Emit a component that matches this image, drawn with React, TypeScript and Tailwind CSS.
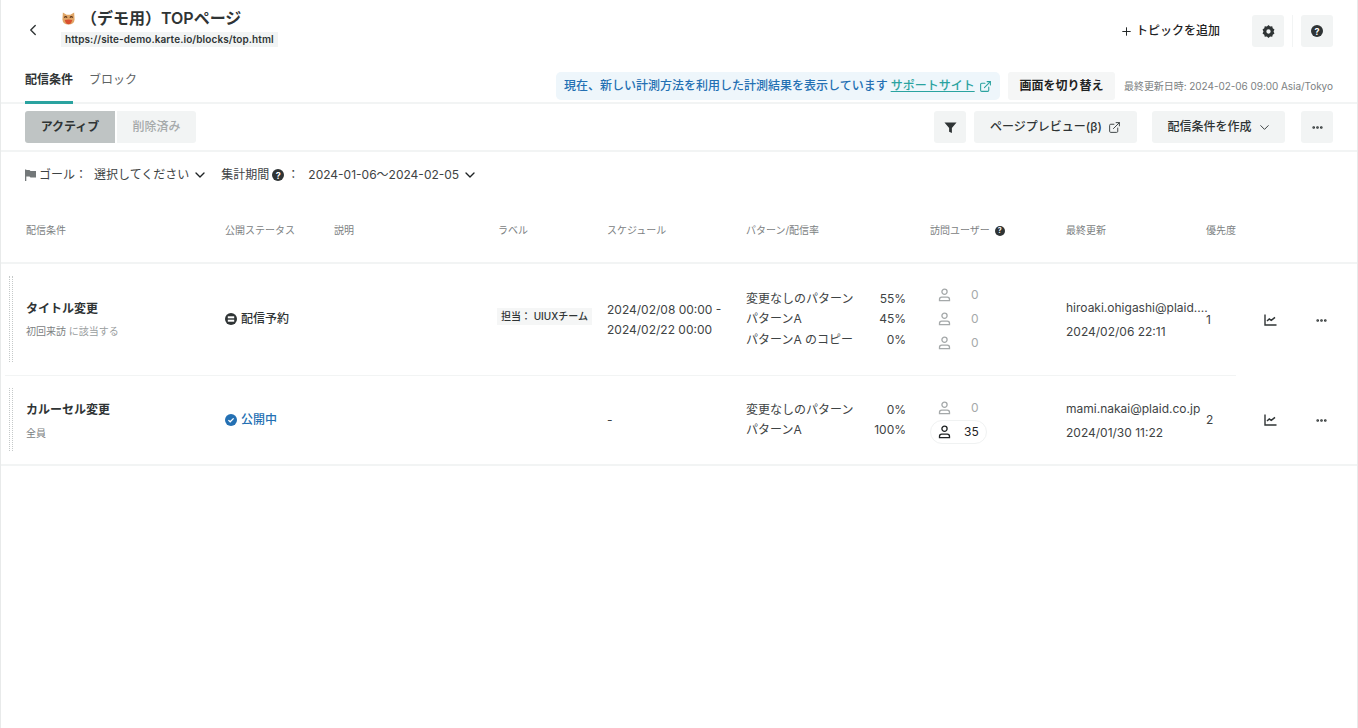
import { ChevronDown, ChevronLeft, Ellipsis, ExternalLink, Plus } from 'lucide-react';

const FONT = "font-['Inter','Noto_Sans_CJK_JP',sans-serif]";

function CatEmoji() {
  return (
    <svg width="15" height="15" viewBox="0 0 16 16">
      <path d="M2 1.500 L6 4 H10 L14 1.500 L14.500 9 Q14 14.500 8 14.500 Q2 14.500 1.500 9 Z" fill="#e0a566" />
      <path d="M4 9.500 Q8 8.500 12 9.500 Q11 14 8 14 Q5 14 4 9.500 Z" fill="#d9502f" />
      <path d="M3.500 7 Q5 5 6.500 7 M9.500 7 Q11 5 12.500 7" stroke="#5a3317" strokeWidth="1.200" fill="none" />
    </svg>
  );
}

function HelpDot({ size = 12 }: { size?: number }) {
  return (
    <span
      className="inline-flex shrink-0 items-center justify-center rounded-full bg-[#2f3435] font-bold leading-none text-white"
      style={{ width: size, height: size, fontSize: size - 3 }}
    >
      ?
    </span>
  );
}

function GearIcon() {
  return (
    <svg width="13" height="13" viewBox="0 0 24 24" fill="#2f3435">
      <path
        fillRule="evenodd"
        d="M12 1l3 2.600 3.900-.4.900 3.900 3.200 2.300L21.300 13l1.700 3.600-3.200 2.300-.9 3.900-3.900-.4L12 25l-3-2.600-3.900.4-.9-3.900L1 16.600 2.700 13 1 9.400l3.200-2.300.9-3.900 3.900.4L12 1zm0 8a4 4 0 100 8 4 4 0 000-8z"
        transform="translate(0 -1)"
      />
    </svg>
  );
}

function FilterIcon() {
  return (
    <svg width="13" height="13" viewBox="0 0 14 14" fill="#2f3435">
      <path d="M0.500 1.500h13L8.500 7.500V13l-3-1.500v-4z" />
    </svg>
  );
}

function FlagIcon() {
  return (
    <svg width="11" height="12" viewBox="0 0 11 12" fill="#737879">
      <path d="M0 0.500h1.300V1h3.200l1 1H11v6.500H5.500l-1-1H1.300V12H0z" />
    </svg>
  );
}

function UserIcon({ dark = false }: { dark?: boolean }) {
  return (
    <svg width="13" height="14" viewBox="0 0 13 14" fill="none" stroke={dark ? '#1f2324' : '#a5a9aa'} strokeWidth="1.300">
      <circle cx="6.500" cy="3.800" r="2.600" />
      <path d="M1.500 12.600v-1.200q0-2.200 2.200-2.200h5.600q2.200 0 2.200 2.200v1.200z" />
    </svg>
  );
}

function ChartIcon() {
  return (
    <svg width="13" height="12" viewBox="0 0 13 12" fill="none" stroke="#2f3435">
      <path d="M1 0.500V11h11.500" strokeWidth="1.400" />
      <path d="M3 7l2.300-2 2 1.300 3.700-3" strokeWidth="1.500" />
    </svg>
  );
}

function ScheduledIcon() {
  return (
    <svg width="12" height="12" viewBox="0 0 12 12">
      <circle cx="6" cy="6" r="6" fill="#2f3435" />
      <rect x="2.800" y="3.300" width="6.400" height="2" fill="#fff" />
      <rect x="2.800" y="6.700" width="6.400" height="2" fill="#fff" />
    </svg>
  );
}

function PublishedIcon() {
  return (
    <svg width="12" height="12" viewBox="0 0 12 12">
      <circle cx="6" cy="6" r="6" fill="#2470b3" />
      <path d="M3.400 6.100l1.800 1.700 3.400-3.400" stroke="#fff" strokeWidth="1.300" fill="none" />
    </svg>
  );
}

function GrayButton({ children, className }: { children: React.ReactNode; className: string }) {
  return (
    <button className={`flex h-8 items-center justify-center rounded-[3px] bg-[#f2f4f4] text-[#2f3435] ${className}`}>
      {children}
    </button>
  );
}

function DragHandle({ className }: { className: string }) {
  return (
    <div className={`absolute left-[8px] flex w-[4px] justify-between ${className}`}>
      <div className="h-full border-l border-dotted border-[#c5c9c9]" />
      <div className="h-full border-l border-dotted border-[#c5c9c9]" />
    </div>
  );
}

const COLUMNS = 'grid-cols-[199px_109px_164px_109px_139px_184px_136px_140px_58px_51px_1fr]';

const HEADERS = ['配信条件', '公開ステータス', '説明', 'ラベル', 'スケジュール', 'パターン/配信率', '訪問ユーザー', '最終更新', '優先度'];

function PatternRow({ name, rate }: { name: string; rate: string }) {
  return (
    <div className="flex h-[20.500px] w-[160px] items-center justify-between text-[12px] text-[#3e4344]">
      <span>{name}</span>
      <span>{rate}</span>
    </div>
  );
}

function VisitRow({ count, active = false }: { count: string; active?: boolean }) {
  if (active) {
    return (
      <div className="flex h-[24px] w-[57px] items-center rounded-full border border-[#f0f2f2] pl-[7px] text-[12px] text-[#1f2324]">
        <UserIcon dark />
        <span className="ml-[13px]">{count}</span>
      </div>
    );
  }
  return (
    <div className="flex h-[24px] items-center pl-[8px] text-[12px] text-[#a5a9aa]">
      <UserIcon />
      <span className="ml-[20px]">{count}</span>
    </div>
  );
}

function RowActions() {
  return (
    <>
      <div className="flex items-center">
        <ChartIcon />
      </div>
      <div className="flex items-center text-[#2f3435]">
        <Ellipsis size={13} strokeWidth={3} />
      </div>
    </>
  );
}

export default function App() {
  return (
    <div className={`${FONT} relative h-[728px] w-[1358px] overflow-hidden border-x border-[#e8eaea] bg-white text-[#2f3435]`}>
      {/* Title bar */}
      <div className="flex h-[60px] items-center pl-[24px] pr-[24px]">
        <ChevronLeft size={18} strokeWidth={1.800} className="-mt-[1px] -ml-[1px] text-[#2f3435]" />
        <div className="ml-[19px] flex flex-col items-start self-start pt-[7px]">
          <div className="flex h-[22px] items-center">
            <CatEmoji />
            <span className="ml-[5px] text-[16px] font-semibold leading-none">（デモ用）TOPページ</span>
          </div>
          <div className="mt-[3px] flex h-[15px] w-[217px] items-center whitespace-nowrap bg-[#f2f4f4] pl-[4px] text-[10px] font-semibold tracking-[0.100px]">
            https://site-demo.karte.io/blocks/top.html
          </div>
        </div>
        <div className="ml-auto mt-[2px] flex items-center">
          <button className="flex items-center gap-[3px] text-[12px] font-medium text-[#1f2324]">
            <Plus size={13} strokeWidth={1.800} />
            トピックを追加
          </button>
          <GrayButton className="ml-[32px] w-[32px]">
            <GearIcon />
          </GrayButton>
          <div className="mx-[8px] h-[32px] border-l border-[#f2f4f4]" />
          <GrayButton className="w-[32px]">
            <HelpDot size={12} />
          </GrayButton>
        </div>
      </div>

      {/* Tabs + notice */}
      <div className="flex h-[44px] border-b-2 border-[#f2f4f4] pl-[24px] pr-[24px]">
        <div className="flex h-[44px] gap-[16px] text-[12px]">
          <div className="flex h-[44px] w-[48px] justify-center border-b-[3px] border-[#2aa3a0] pt-[11px] font-semibold">配信条件</div>
          <div className="pt-[11px] text-[#5e6364]">ブロック</div>
        </div>
        <div className="ml-auto mt-[12px] flex h-[28px] items-center self-start">
          <div className="flex h-[28px] w-[444px] items-center rounded-[5px] bg-[#eef6fb] pl-[8px] text-[12px] font-medium text-[#2470b3]">
            現在、新しい計測方法を利用した計測結果を表示しています
            <span className="ml-[3px] text-[#2aa3a0] underline">サポートサイト</span>
            <ExternalLink size={13} className="ml-[4px] text-[#2aa3a0]" />
          </div>
          <button className="ml-[8px] flex h-[28px] w-[107px] items-center justify-center rounded-[3px] bg-[#f5f6f6] text-[12px] font-semibold text-[#1f2324]">
            画面を切り替え
          </button>
          <span className="ml-[9px] w-[209px] whitespace-nowrap text-[10px] tracking-[-0.050px] text-[#7c8182]">最終更新日時: 2024-02-06 09:00 Asia/Tokyo</span>
        </div>
      </div>

      {/* Toolbar */}
      <div className="flex h-[48px] items-center border-b-2 border-[#f2f4f4] pl-[24px] pr-[24px]">
        <div className="flex h-8 text-[12px]">
          <div className="flex w-[90px] items-center justify-center rounded-l-[3px] bg-[#bfc4c4] font-semibold">アクティブ</div>
          <div className="ml-[2px] flex w-[79px] items-center justify-center rounded-r-[3px] bg-[#f2f4f4] font-medium text-[#a5a9aa]">削除済み</div>
        </div>
        <div className="ml-auto flex items-center text-[12px] font-medium">
          <GrayButton className="w-[32px]">
            <FilterIcon />
          </GrayButton>
          <GrayButton className="ml-[8px] w-[163px] gap-[6px]">
            ページプレビュー(β)
            <ExternalLink size={13} strokeWidth={1.800} className="text-[#3e4344]" />
          </GrayButton>
          <GrayButton className="ml-[15px] w-[133px] gap-[5px] pl-[2px]">
            配信条件を作成
            <ChevronDown size={15} strokeWidth={1.500} />
          </GrayButton>
          <GrayButton className="ml-[16px] w-[32px]">
            <Ellipsis size={13} strokeWidth={3} />
          </GrayButton>
        </div>
      </div>

      {/* Filter row */}
      <div className="flex h-[44px] items-center pl-[24px] pt-[1px] text-[12px] text-[#3e4344]">
        <FlagIcon />
        <span className="ml-[3px]">ゴール：</span>
        <span className="ml-[7px]">選択してください</span>
        <ChevronDown size={16} strokeWidth={2} className="ml-[3px] mt-[1px] text-[#1f2324]" />
        <span className="ml-[13px]">集計期間</span>
        <span className="ml-[3px]">
          <HelpDot size={12} />
        </span>
        <span className="ml-[3px]">：</span>
        <span className="ml-[9px]">2024-01-06〜2024-02-05</span>
        <ChevronDown size={16} strokeWidth={2} className="ml-[3px] mt-[1px] text-[#1f2324]" />
      </div>

      {/* Table header */}
      <div className={`grid h-[68px] items-center border-b-2 border-[#f2f4f4] pl-[25px] pt-[3px] text-[10px] text-[#7c8182] ${COLUMNS}`}>
        {HEADERS.map((label) => (
          <div key={label} className="flex items-center gap-[5px]">
            {label}
            {label === '訪問ユーザー' && <HelpDot size={10} />}
          </div>
        ))}
      </div>

      {/* Row 1 */}
      <div className="relative">
        <DragHandle className="top-[12px] h-[86px]" />
        <div className="absolute bottom-0 left-[4px] w-[1231px] border-b border-[#f2f4f4]" />
        <div className={`grid h-[112px] pl-[25px] ${COLUMNS}`}>
          <div className="flex flex-col justify-center gap-[6px] pb-[2px]">
            <div className="text-[12px] font-semibold leading-[18px]">タイトル変更</div>
            <div className="text-[10px] leading-[14px] text-[#9a9ea0]">
              <span className="text-[#7c8182]">初回来訪</span> に該当する
            </div>
          </div>
          <div className="flex items-center gap-[4px] pb-[2px] text-[12px] font-medium">
            <ScheduledIcon />
            配信予約
          </div>
          <div />
          <div className="flex items-center pb-[7px]">
            <span className="-ml-[1px] whitespace-nowrap bg-[#f5f6f6] px-[4px] py-[1px] text-[10px] font-medium">担当： UIUXチーム</span>
          </div>
          <div className="flex items-center text-[12px] leading-[20.500px] text-[#3e4344]">
            2024/02/08 00:00 -<br />2024/02/22 00:00
          </div>
          <div className="flex flex-col justify-center pb-[2px]">
            <PatternRow name="変更なしのパターン" rate="55%" />
            <PatternRow name="パターンA" rate="45%" />
            <PatternRow name="パターンA のコピー" rate="0%" />
          </div>
          <div className="flex flex-col justify-center pb-[2px]">
            <VisitRow count="0" />
            <VisitRow count="0" />
            <VisitRow count="0" />
          </div>
          <div className="flex flex-col justify-center gap-[6px] text-[12px] leading-[18px] text-[#3e4344]">
            <div className="whitespace-nowrap">hiroaki.ohigashi@plaid....</div>
            <div>2024/02/06 22:11</div>
          </div>
          <div className="flex items-center text-[12px] text-[#3e4344]">1</div>
          <RowActions />
        </div>
      </div>

      {/* Row 2 */}
      <div className="relative border-b-2 border-[#f2f4f4]">
        <DragHandle className="top-[12px] h-[63px]" />
        <div className={`grid h-[88px] pl-[25px] ${COLUMNS}`}>
          <div className="flex flex-col justify-center gap-[7px] pt-[1px]">
            <div className="text-[12px] font-semibold leading-[18px]">カルーセル変更</div>
            <div className="text-[10px] leading-[14px] text-[#7c8182]">全員</div>
          </div>
          <div className="flex items-center gap-[4px] text-[12px] font-medium text-[#2470b3]">
            <PublishedIcon />
            公開中
          </div>
          <div />
          <div />
          <div className="flex items-center text-[12px] text-[#3e4344]">-</div>
          <div className="flex flex-col justify-center">
            <PatternRow name="変更なしのパターン" rate="0%" />
            <PatternRow name="パターンA" rate="100%" />
          </div>
          <div className="flex flex-col justify-center">
            <VisitRow count="0" />
            <VisitRow count="35" active />
          </div>
          <div className="flex flex-col justify-center gap-[6px] pt-[2px] text-[12px] leading-[18px] text-[#3e4344]">
            <div>mami.nakai@plaid.co.jp</div>
            <div>2024/01/30 11:22</div>
          </div>
          <div className="flex items-center text-[12px] text-[#3e4344]">2</div>
          <RowActions />
        </div>
      </div>
    </div>
  );
}
